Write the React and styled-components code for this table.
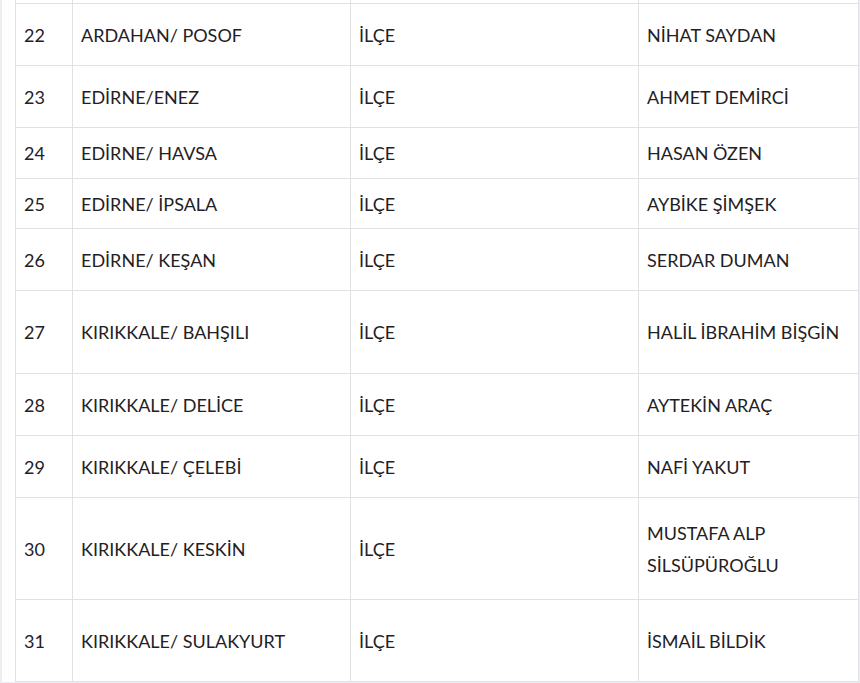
import React from "react";
import styled, { createGlobalStyle } from "styled-components";

const Global = createGlobalStyle`
  html, body { margin: 0; padding: 0; background: #eceef1; }
  body { font-family: Lato, "Noto Sans", sans-serif; overflow: hidden; }
`;

const Panel = styled.div`
  background: #ffffff;
  margin-left: 2px;
  width: 856px;
  padding-left: 13px;
  box-sizing: border-box;
`;

const Table = styled.table`
  width: 843px;
  border-collapse: collapse;
  table-layout: fixed;
  color: #1f2125;
  font-size: 18px;
  line-height: 32px;
`;

const Row = styled.tr`
  height: ${(p) => p.$h}px;
`;

const Cell = styled.td`
  border: 1px solid #dfe1e5;
  padding: 1px 8px 0 8px;
  vertical-align: middle;
  text-align: left;
  ${(p) => (p.$clip ? "border-top: none; padding: 0;" : "")}
`;

const rows = [
  ["22", "ARDAHAN/ POSOF", "İLÇE", "NİHAT SAYDAN", 62],
  ["23", "EDİRNE/ENEZ", "İLÇE", "AHMET DEMİRCİ", 62],
  ["24", "EDİRNE/ HAVSA", "İLÇE", "HASAN ÖZEN", 51],
  ["25", "EDİRNE/ İPSALA", "İLÇE", "AYBİKE ŞİMŞEK", 50],
  ["26", "EDİRNE/ KEŞAN", "İLÇE", "SERDAR DUMAN", 62],
  ["27", "KIRIKKALE/ BAHŞILI", "İLÇE", "HALİL İBRAHİM BİŞGİN", 83],
  ["28", "KIRIKKALE/ DELİCE", "İLÇE", "AYTEKİN ARAÇ", 62],
  ["29", "KIRIKKALE/ ÇELEBİ", "İLÇE", "NAFİ YAKUT", 62],
  ["30", "KIRIKKALE/ KESKİN", "İLÇE", "MUSTAFA ALP SİLSÜPÜROĞLU", 102],
  ["31", "KIRIKKALE/ SULAKYURT", "İLÇE", "İSMAİL BİLDİK", 82],
];

export default function App() {
  return (
    <>
      <Global />
      <Panel>
        <Table>
          <colgroup>
            <col style={{ width: 57 }} />
            <col style={{ width: 278 }} />
            <col style={{ width: 288 }} />
            <col style={{ width: 220 }} />
          </colgroup>
          <tbody>
            <Row $h={3}>
              <Cell $clip />
              <Cell $clip />
              <Cell $clip />
              <Cell $clip />
            </Row>
            {rows.map(([n, place, type, name, h]) => (
              <Row key={n} $h={h}>
                <Cell>{n}</Cell>
                <Cell>{place}</Cell>
                <Cell>{type}</Cell>
                <Cell>{name}</Cell>
              </Row>
            ))}
          </tbody>
        </Table>
      </Panel>
    </>
  );
}
